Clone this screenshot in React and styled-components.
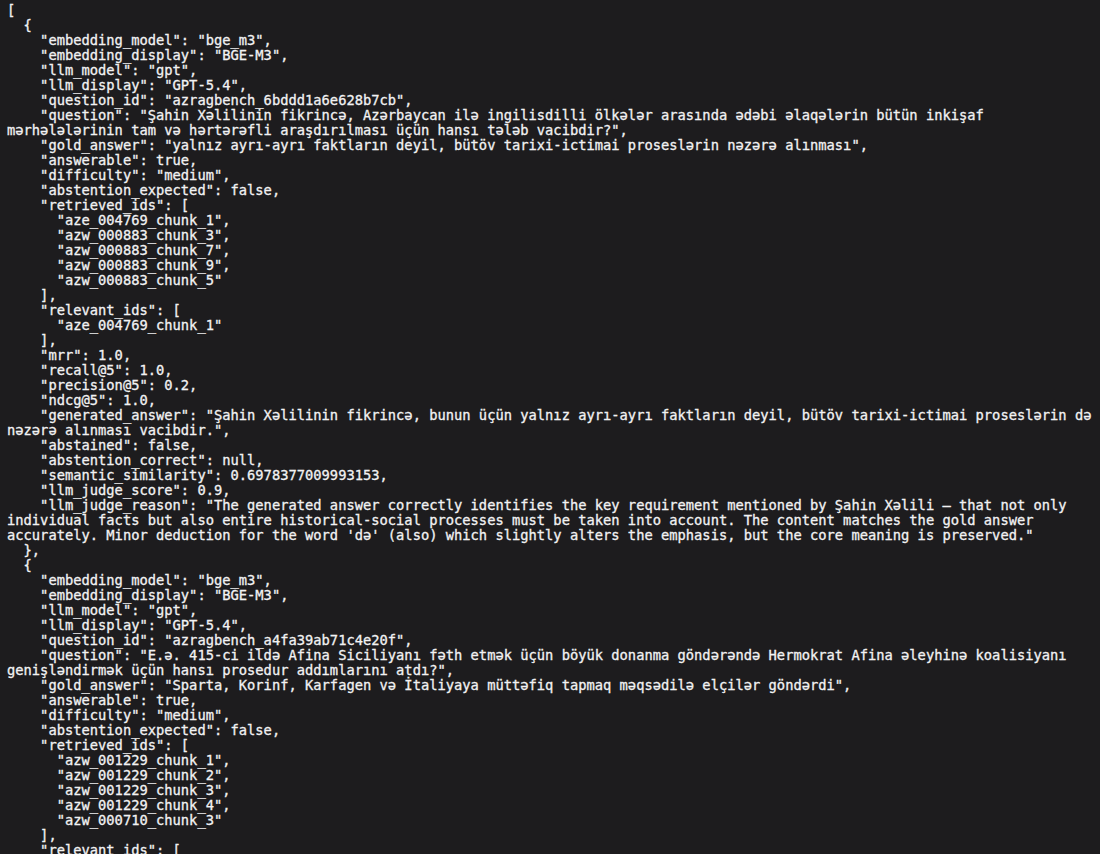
import styled, { createGlobalStyle } from "styled-components";

const Global = createGlobalStyle`
  html, body {
    margin: 0;
    padding: 0;
    background: #1d1c1e;
  }
`;

const Terminal = styled.div`
  width: 1100px;
  height: 854px;
  overflow: hidden;
  box-sizing: border-box;
  padding: 3px 0 0 7px;
  background: #1d1c1e;
  color: #f2f2f3;
  font-family: "DejaVu Sans Mono", "Liberation Mono", monospace;
  font-size: 13.75px;
  line-height: 15px;
  -webkit-text-stroke: 0.3px #f2f2f3;
`;

const Line = styled.div`
  white-space: pre;
  height: 15px;
`;

const first = [
  "[",
  "  {",
  '    "embedding_model": "bge_m3",',
  '    "embedding_display": "BGE-M3",',
  '    "llm_model": "gpt",',
  '    "llm_display": "GPT-5.4",',
  '    "question_id": "azragbench_6bddd1a6e628b7cb",',
  '    "question": "Şahin Xəlilinin fikrincə, Azərbaycan ilə ingilisdilli ölkələr arasında ədəbi əlaqələrin bütün inkişaf',
  'mərhələlərinin tam və hərtərəfli araşdırılması üçün hansı tələb vacibdir?",',
  '    "gold_answer": "yalnız ayrı-ayrı faktların deyil, bütöv tarixi-ictimai proseslərin nəzərə alınması",',
  '    "answerable": true,',
  '    "difficulty": "medium",',
  '    "abstention_expected": false,',
  '    "retrieved_ids": [',
  '      "aze_004769_chunk_1",',
  '      "azw_000883_chunk_3",',
  '      "azw_000883_chunk_7",',
  '      "azw_000883_chunk_9",',
  '      "azw_000883_chunk_5"',
  "    ],",
  '    "relevant_ids": [',
  '      "aze_004769_chunk_1"',
  "    ],",
  '    "mrr": 1.0,',
  '    "recall@5": 1.0,',
  '    "precision@5": 0.2,',
  '    "ndcg@5": 1.0,',
  '    "generated_answer": "Şahin Xəlilinin fikrincə, bunun üçün yalnız ayrı-ayrı faktların deyil, bütöv tarixi-ictimai proseslərin də',
  'nəzərə alınması vacibdir.",',
  '    "abstained": false,',
  '    "abstention_correct": null,',
  '    "semantic_similarity": 0.6978377009993153,',
  '    "llm_judge_score": 0.9,',
  '    "llm_judge_reason": "The generated answer correctly identifies the key requirement mentioned by Şahin Xəlili – that not only',
  "individual facts but also entire historical-social processes must be taken into account. The content matches the gold answer",
  "accurately. Minor deduction for the word 'də' (also) which slightly alters the emphasis, but the core meaning is preserved.\"",
  "  },",
];

const second = [
  "  {",
  '    "embedding_model": "bge_m3",',
  '    "embedding_display": "BGE-M3",',
  '    "llm_model": "gpt",',
  '    "llm_display": "GPT-5.4",',
  '    "question_id": "azragbench_a4fa39ab71c4e20f",',
  '    "question": "E.ə. 415-ci ildə Afina Siciliyanı fəth etmək üçün böyük donanma göndərəndə Hermokrat Afina əleyhinə koalisiyanı',
  'genişləndirmək üçün hansı prosedur addımlarını atdı?",',
  '    "gold_answer": "Sparta, Korinf, Karfagen və İtaliyaya müttəfiq tapmaq məqsədilə elçilər göndərdi",',
  '    "answerable": true,',
  '    "difficulty": "medium",',
  '    "abstention_expected": false,',
  '    "retrieved_ids": [',
  '      "azw_001229_chunk_1",',
  '      "azw_001229_chunk_2",',
  '      "azw_001229_chunk_3",',
  '      "azw_001229_chunk_4",',
  '      "azw_000710_chunk_3"',
  "    ],",
  '    "relevant_ids": [',
];

const lines = [...first, ...second];

export default function App() {
  return (
    <>
      <Global />
      <Terminal>
        {lines.map((text, i) => (
          <Line key={i}>{text}</Line>
        ))}
      </Terminal>
    </>
  );
}
